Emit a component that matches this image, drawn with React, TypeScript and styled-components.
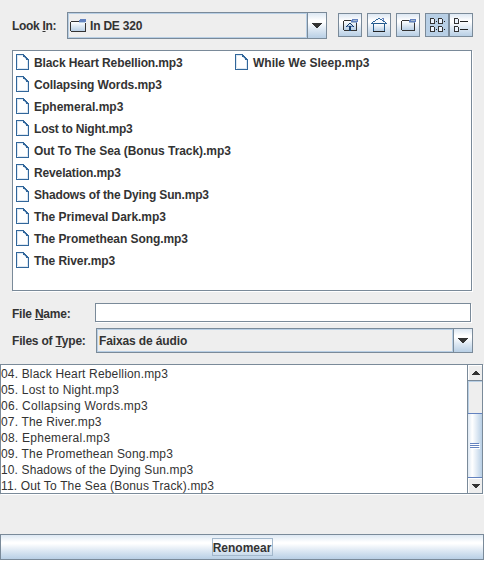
import React from "react";
import styled, { createGlobalStyle } from "styled-components";

const Global = createGlobalStyle`
  * { box-sizing: border-box; }
  body { margin: 0; background: #eeeeee; overflow: hidden; }
  button { font: inherit; color: inherit; padding: 0; margin: 0; border-radius: 0; }
`;

const line = "#7a8a99";
const ocean = "linear-gradient(#dde8f3 0%, #ffffff 30%, #ffffff 36%, #dde8f3 65%, #b8cfe5 100%)";

const Window = styled.main`
  width: 484px;
  height: 561px;
  display: flex;
  flex-direction: column;
  background: #eeeeee;
  color: #333333;
  font: bold 12px/16px "Liberation Sans", Arial, sans-serif;
`;

const Chooser = styled.section`
  height: 364px;
  padding: 12px 11px 0 12px;
  display: flex;
  flex-direction: column;
`;

const Toolbar = styled.div`
  display: flex;
  height: 27px;
`;

const Label = styled.label<{ $width: number; $top: number; $tracking: number }>`
  width: ${(p) => p.$width}px;
  padding-top: ${(p) => p.$top}px;
  letter-spacing: ${(p) => p.$tracking}px;
  flex: none;
  white-space: nowrap;
`;

const Mnemonic = styled.span`
  text-decoration: underline;
  text-decoration-thickness: 1px;
  text-underline-offset: 1px;
  text-decoration-skip-ink: none;
`;

const Text = styled.span<{ $tracking: number }>`
  letter-spacing: ${(p) => p.$tracking}px;
`;

const Combo = styled.div<{ $width: number; $height: number }>`
  width: ${(p) => p.$width}px;
  height: ${(p) => p.$height}px;
  display: flex;
  border: 1px solid ${line};
`;

const ComboValue = styled.div`
  flex: 1;
  display: flex;
  align-items: center;
  border: 1px solid #b8cfe5;
  padding-left: 1px;
  gap: 4px;
`;

const ComboArrow = styled.button`
  width: 19px;
  border: 0;
  border-left: 1px solid ${line};
  background: ${ocean};
  display: flex;
  align-items: center;
  justify-content: center;
`;

const Tools = styled.div`
  display: flex;
  margin: 1px 0 0 11px;
  gap: 5px;
`;

const ToolButton = styled.button<{ $pressed?: boolean }>`
  width: 24px;
  height: 24px;
  border: 1px solid ${line};
  background: ${(p) => (p.$pressed ? "#b8cfe5" : ocean)};
  display: flex;
  align-items: center;
  justify-content: center;
  & > svg { flex: none; }
`;

const Toggles = styled.div`
  display: flex;
`;

const FileList = styled.div`
  width: 460px;
  height: 241px;
  margin-top: 11px;
  padding: 1px 0 0 3px;
  border: 1px solid ${line};
  box-shadow: 1px 1px 0 #fff;
  background: #fff;
  display: grid;
  grid-template-rows: repeat(10, 22px);
  grid-template-columns: 219px 219px;
  grid-auto-flow: column;
`;

const FileItem = styled.div`
  display: flex;
  align-items: center;
  gap: 5px;
  white-space: nowrap;
  & > svg { margin-bottom: 2px; }
`;

const FieldRow = styled.div<{ $gap: number }>`
  display: flex;
  margin-top: ${(p) => p.$gap}px;
`;

const TextField = styled.input`
  width: 376px;
  height: 19px;
  padding: 0 2px;
  border: 1px solid ${line};
  border-radius: 0;
  background: #fff;
  outline: 0;
  font: 12px "Liberation Sans", Arial, sans-serif;
  box-shadow: 1px 1px 0 #fff;
`;

const Log = styled.section`
  width: 483px;
  height: 130px;
  border: 1px solid ${line};
  display: flex;
  background: #fff;
  box-shadow: 1px 1px 0 #fff;
`;

const LogLines = styled.div`
  flex: 1;
  padding-top: 1px;
  font-weight: normal;
  white-space: nowrap;
  overflow: hidden;
`;

const LogLine = styled.div<{ $tracking: number }>`
  height: 16px;
  letter-spacing: ${(p) => p.$tracking}px;
`;

const ScrollBar = styled.div`
  width: 15px;
  border-left: 1px solid ${line};
  display: flex;
  flex-direction: column;
  background: #eeeeee;
`;

const ScrollButton = styled.button`
  height: 15px;
  border: 0;
  background: #eeeeee;
  border-left: 1px solid #fff;
  border-top: 1px solid #fff;
  display: flex;
  align-items: center;
  justify-content: center;
`;

const Track = styled.div`
  flex: 1;
  border: 1px solid ${line};
  border-width: 1px 0 0;
  padding-top: 32px;
  box-shadow: inset 1px 1px 0 #b8cfe5;
`;

const Thumb = styled.div`
  height: 65px;
  border: 1px solid #6382bf;
  border-width: 1px 0;
  background: linear-gradient(90deg, #dde8f3 0%, #ffffff 30%, #dde8f3 65%, #b8cfe5 100%);
  display: flex;
  align-items: center;
  justify-content: center;
`;

const RenameButton = styled.button`
  width: 484px;
  height: 26px;
  margin-top: 40px;
  border: 1px solid ${line};
  background: ${ocean};
  box-shadow: 0 1px 0 #fff;
  display: flex;
  align-items: center;
  justify-content: center;
`;

const FocusText = styled.span`
  width: 61px;
  height: 18px;
  padding-top: 2px;
  line-height: 16px;
  border: 1px solid #a3b8cc;
  display: flex;
  align-items: center;
  justify-content: center;
`;

const Arrow = () => (
  <svg width="10" height="5" shapeRendering="crispEdges">
    <path d="M0 0h10v1H9v1H8v1H7v1H6v1H4V4H3V3H2V2H1V1H0z" fill="#333" />
  </svg>
);

const ScrollArrow = ({ up = false }: { up?: boolean }) => (
  <svg width="8" height="4" shapeRendering="crispEdges">
    <path d={up ? "M3 0h2v1h1v1h1v1h1v1H0V3h1V2h1V1h1z" : "M0 0h8v1H7v1H6v1H5v1H3V3H2V2H1V1H0z"} fill="#333" />
  </svg>
);

const FolderGradient = ({ id }: { id: string }) => (
  <defs>
    <linearGradient id={id} x1="0" y1="0" x2="0" y2="1">
      <stop offset="0" stopColor="#ffffff" />
      <stop offset="1" stopColor="#b8cfe5" />
    </linearGradient>
  </defs>
);

const CurrentFolder = () => (
  <svg width="16" height="13" shapeRendering="crispEdges">
    <FolderGradient id="current" />
    <path d="M1 3h14v9H1z" fill="url(#current)" />
    <path d="M1 2h8v1H1zM0 3h1v9H0zM1 12h15v1H1zM15 4h1v8h-1zM9 3h1v1H9z" fill="#333" />
    <path d="M10 0h6v3h-1v1H9V1h1z" fill="#6382bf" />
    <path d="M9 3h6v1H9z" fill="#b8cfe5" />
  </svg>
);

const ToolFolder = ({ id, up = false }: { id: string; up?: boolean }) => (
  <svg width="16" height="14" shapeRendering="crispEdges">
    <FolderGradient id={id} />
    <path d="M2 3h12v9H2z" fill={`url(#${id})`} />
    <path d="M2 2h7v1H2zM1 3h1v9H1zM2 12h13v1H2zM14 4h1v8h-1z" fill="#333" />
    <path d="M10 1h6v3h-1v1H9V2h1z" fill="#6382bf" />
    <path d="M9 4h5v1H9zM11 2h4v1h-4z" fill="#a3b8cc" />
    {up && (
      <>
        <path d="M8 6h1v1h1v1h1v1H9v4H7V9H5V8h1V7h2z" fill="#b8cfe5" />
        <path d="M7 5h2v1H7zM6 6h1v1H6zM9 6h1v1H9zM5 7h1v1H5zM10 7h1v1h-1zM4 8h1v1H4zM11 8h1v1h-1zM7 8h2v5H7z" fill="#163e69" />
        <path d="M5 8h2v1H5zM9 8h2v1H9z" fill="#6382bf" />
      </>
    )}
  </svg>
);

const Home = () => (
  <svg width="16" height="16" viewBox="0 0 16 16" shapeRendering="crispEdges">
    <FolderGradient id="home" />
    <path d="M3 7h10v7H3z" fill="url(#home)" />
    <path d="M8 1L1 7h14z" fill="#f8fbff" />
    <path d="M7 1h2v1H7zM5 2h2v1H5zM9 2h2v1H9zM4 3h1v1H4zM11 3h1v1h-1zM2 4h2v1H2zM12 4h2v1h-2zM1 5h1v1H1zM14 5h1v1h-1zM0 6h4v1H0zM12 6h4v1h-4z" fill="#31669a" />
    <path d="M11 1h2v3h-1V2h-1z" fill="#6382bf" />
    <path d="M2 7h1v7h10V7h1v8H2zM3 6h10v1H3z" fill="#24598a" />
    <path d="M2 14h12v1H2z" fill="#222" />
  </svg>
);

const GridIcon = () => (
  <svg width="15" height="14" viewBox="0 0 15 14" shapeRendering="crispEdges">
    {[0, 8].map((x) =>
      [0, 8].map((y) => (
        <g key={`${x}-${y}`}>
          <path d={`M${x + 0.5} ${y + 0.5}h3l1 1v4h-4z`} fill="#eef5ff" stroke="#333" />
          <path d={`M${x + 6} ${y + 3}h1v1h-1z`} fill="#222" />
        </g>
      ))
    )}
  </svg>
);

const DetailIcon = () => (
  <svg width="14" height="14" viewBox="0 0 14 14" shapeRendering="crispEdges">
    {[0, 8].map((y) => (
      <g key={y}>
        <path d={`M.5 ${y + 0.5}h3l1 1v4h-4z`} fill="#eef5ff" stroke="#333" />
        <path d={`M6 ${y + 3.5}h8`} stroke="#222" />
      </g>
    ))}
  </svg>
);

const FileIcon = () => (
  <svg width="13" height="16" viewBox="0 0 13 16" shapeRendering="crispEdges">
    <path d="M.5.5h7l5 5v10H.5z" fill="#fff" stroke="#31669a" />
    <path d="M1.5 14V1.5H7M2 14.5h9.5V6" fill="none" stroke="#dde8f3" />
    <path d="M7 1h1v1h1v1h1v1h1v1h1v1h-2V5H9V4H8V3H7z" fill="#31669a" />
    <path d="M8 3h1v1H8zM9 4h1v1H9z" fill="#b8cfe5" />
  </svg>
);

const Grip = () => (
  <svg width="10" height="6" shapeRendering="crispEdges">
    <path d="M1 1.5h9M1 3.5h9M1 5.5h9" stroke="#fff" />
    <path d="M0 .5h9M0 2.5h9M0 4.5h9" stroke="#6382bf" />
  </svg>
);

const files: [string, number][] = [
  ["Black Heart Rebellion.mp3", -0.11],
  ["Collapsing Words.mp3", -0.1],
  ["Ephemeral.mp3", 0],
  ["Lost to Night.mp3", -0.2],
  ["Out To The Sea (Bonus Track).mp3", -0.05],
  ["Revelation.mp3", -0.14],
  ["Shadows of the Dying Sun.mp3", -0.16],
  ["The Primeval Dark.mp3", -0.04],
  ["The Promethean Song.mp3", -0.06],
  ["The River.mp3", -0.07],
  ["While We Sleep.mp3", 0],
];

const tracks: [string, number][] = [
  ["04. Black Heart Rebellion.mp3", 0.17],
  ["05. Lost to Night.mp3", 0.19],
  ["06. Collapsing Words.mp3", 0.27],
  ["07. The River.mp3", 0.17],
  ["08. Ephemeral.mp3", 0.26],
  ["09. The Promethean Song.mp3", 0.18],
  ["10. Shadows of the Dying Sun.mp3", 0.13],
  ["11. Out To The Sea (Bonus Track).mp3", 0.16],
];

export default function App() {
  return (
    <>
      <Global />
      <Window>
        <Chooser>
          <Toolbar>
            <Label $width={55} $top={6} $tracking={-0.3}>Look <Mnemonic>I</Mnemonic>n:</Label>
            <Combo $width={260} $height={27}>
              <ComboValue><CurrentFolder /><Text $tracking={-0.2}>In DE 320</Text></ComboValue>
              <ComboArrow aria-label="Open folder list"><Arrow /></ComboArrow>
            </Combo>
            <Tools>
              <ToolButton aria-label="Up one level"><ToolFolder id="up" up /></ToolButton>
              <ToolButton aria-label="Home"><Home /></ToolButton>
              <ToolButton aria-label="New folder"><ToolFolder id="new" /></ToolButton>
              <Toggles>
                <ToolButton $pressed aria-label="List"><GridIcon /></ToolButton>
                <ToolButton aria-label="Details"><DetailIcon /></ToolButton>
              </Toggles>
            </Tools>
          </Toolbar>
          <FileList>
            {files.map(([name, tracking]) => (
              <FileItem key={name}><FileIcon /><Text $tracking={tracking}>{name}</Text></FileItem>
            ))}
          </FileList>
          <FieldRow $gap={12}>
            <Label $width={83} $top={3} $tracking={-0.22}>File <Mnemonic>N</Mnemonic>ame:</Label>
            <TextField aria-label="File name" />
          </FieldRow>
          <FieldRow $gap={6}>
            <Label $width={84} $top={5} $tracking={-0.2}>Files of <Mnemonic>T</Mnemonic>ype:</Label>
            <Combo $width={377} $height={25}>
              <ComboValue><Text $tracking={-0.13}>Faixas de áudio</Text></ComboValue>
              <ComboArrow aria-label="Open type list"><Arrow /></ComboArrow>
            </Combo>
          </FieldRow>
        </Chooser>
        <Log>
          <LogLines>
            {tracks.map(([name, tracking]) => <LogLine key={name} $tracking={tracking}>{name}</LogLine>)}
          </LogLines>
          <ScrollBar>
            <ScrollButton aria-label="Scroll up"><ScrollArrow up /></ScrollButton>
            <Track><Thumb><Grip /></Thumb></Track>
            <ScrollButton aria-label="Scroll down"><ScrollArrow /></ScrollButton>
          </ScrollBar>
        </Log>
        <RenameButton><FocusText>Renomear</FocusText></RenameButton>
      </Window>
    </>
  );
}
